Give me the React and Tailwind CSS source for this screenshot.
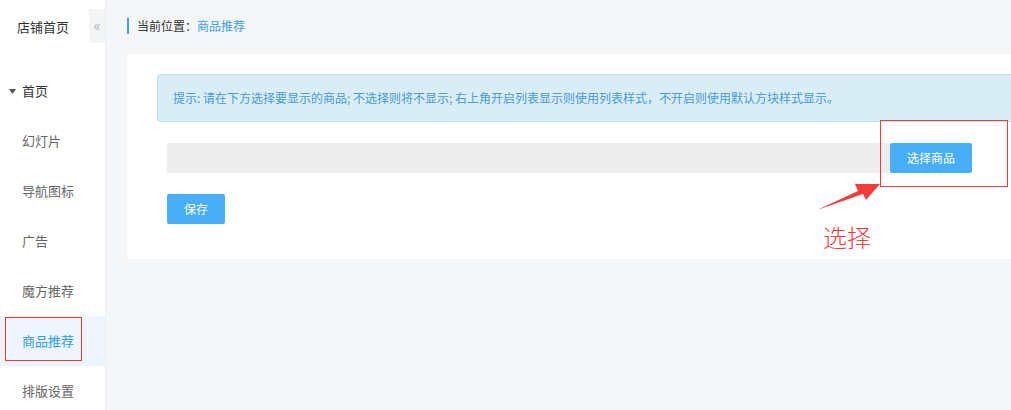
const font = { fontFamily: '"Noto Sans CJK SC", "Noto Sans", sans-serif' }

const menu = ['幻灯片', '导航图标', '广告', '魔方推荐', '商品推荐', '排版设置']

function Sidebar() {
  return (
    <aside className="relative w-[106px] shrink-0 bg-white border-r border-[#eceef1]">
      <div className="flex h-[66px] items-start">
        <div className="flex h-[54px] w-[90px] items-center pl-[17px] text-[13px] text-[#333]">店铺首页</div>
        <div className="mt-[9px] flex h-[34px] w-[16px] items-center justify-center bg-[#f3f4f6] pb-[2px] text-[15px] text-[#aab3c0]">«</div>
      </div>
      <div className="flex h-[50px] items-center pl-[9px] text-[13px] text-[#333]">
        <svg width="7" height="5" viewBox="0 0 7 5" className="mr-[6px]">
          <path d="M0 0h7L3.5 5z" fill="#555" />
        </svg>
        首页
      </div>
      {menu.map((m) => (
        <div
          key={m}
          className={
            'flex h-[50px] items-center pl-[22px] text-[13px] ' +
            (m === '商品推荐' ? 'bg-[#eef5fe] text-[#2d9cf0]' : 'text-[#666]')
          }
        >
          {m}
        </div>
      ))}
      <div className="absolute left-[5px] top-[317px] h-[44px] w-[77px] border border-[#f03a3a]" />
    </aside>
  )
}

export default function App() {
  return (
    <div className="relative flex h-[410px] w-[1011px] overflow-hidden bg-[#f5f6f8]" style={font}>
      <Sidebar />
      <main className="flex-1 pl-[21px]">
        <div className="flex h-[54px] items-center pb-[2px] text-[12px]">
          <span className="mr-[8px] h-[16px] w-[2px] bg-[#3a9ff0]" />
          <span className="text-[#333]">当前位置：</span>
          <span className="text-[#3a9ff0]">商品推荐</span>
        </div>
        <div className="w-[920px] bg-white pl-[30px] pt-[20px] pb-[35px]">
          <div className="flex h-[48px] items-center rounded-[3px] border border-[#c1dfee] bg-[#d9edf7] pl-[15px] text-[12px] text-[#4a9ad6]">
            提示: 请在下方选择要显示的商品; 不选择则将不显示; 右上角开启列表显示则使用列表样式，不开启则使用默认方块样式显示。
          </div>
          <div className="ml-[10px] mt-[21px] flex h-[30px]">
            <div className="w-[723px] bg-[#ededed]" />
            <button className="h-[30px] w-[82px] rounded-[2px] bg-[#49aef8] text-[12px] text-white">选择商品</button>
          </div>
          <button className="ml-[10px] mt-[21px] h-[30px] w-[58px] rounded-[2px] bg-[#49aef8] text-[12px] text-white">保存</button>
        </div>
      </main>

      <div className="absolute left-[880px] top-[120px] h-[67px] w-[128px] border border-[#f03a3a]" />
      <svg className="absolute left-[815px] top-[180px]" width="70" height="35" viewBox="0 0 70 35">
        <path d="M2 30 L43 11 L40 4 L65 4 L51 20 L48 14 Z" fill="#f23b3b" />
      </svg>
      <div className="absolute left-[823px] top-[222px] text-[24px] font-light leading-[30px] text-[#f23b3b]">选择</div>
    </div>
  )
}
